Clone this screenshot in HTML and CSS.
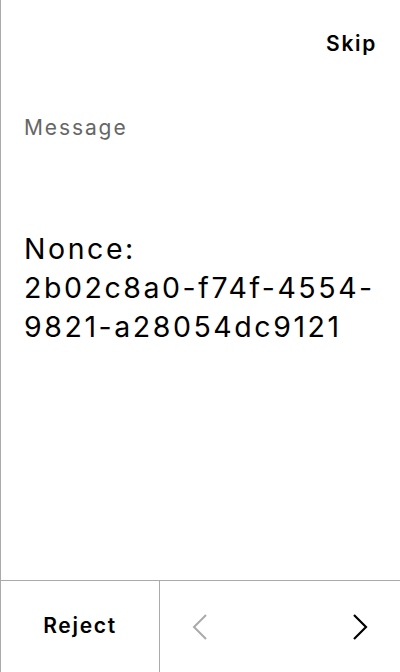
FILE: index.html
```html
<!DOCTYPE html>
<html>
<head>
<meta charset="utf-8">
<link rel="stylesheet" href="styles.css">
</head>
<body>
<div class="screen">
  <header class="top">
    <span class="skip">Skip</span>
  </header>
  <main class="content">
    <div class="label">Message</div>
    <div class="message">Nonce:<br>2b02c8a0-f74f-4554-9821-a28054dc9121</div>
  </main>
  <footer class="footer">
    <div class="reject">Reject</div>
    <div class="nav">
      <svg class="chev" width="16" height="28" viewBox="0 0 16 28"><path d="M14 2 L2 14 L14 26" fill="none" stroke="#aaaaaa" stroke-width="2"/></svg>
      <svg class="chev" width="16" height="28" viewBox="0 0 16 28"><path d="M2 2 L14 14 L2 26" fill="none" stroke="#000" stroke-width="2.2"/></svg>
    </div>
  </footer>
</div>
</body>
</html>
```
FILE: styles.css
```css
* { box-sizing: border-box; }
html, body { margin: 0; padding: 0; background: #fff; }
body { font-family: Inter, "Noto Sans", sans-serif; color: #000; }
.screen {
  width: 400px;
  height: 672px;
  border-left: 1px solid #aaaaaa;
  display: flex;
  flex-direction: column;
}
.top {
  display: flex;
  justify-content: flex-end;
  padding: 30px 23px 0 0;
  height: 70px;
}
.skip { font-size: 21px; font-weight: 600; line-height: 28px; letter-spacing: 0.08em; }
.content { flex: 1; padding: 44px 14px 0 23px; }
.label { font-size: 21px; color: #666; line-height: 28px; letter-spacing: 0.09em; }
.message {
  margin-top: 87px;
  font-size: 28.5px;
  line-height: 39px;
  letter-spacing: 0.09em;
}
.footer {
  height: 92px;
  border-top: 1px solid #aaaaaa;
  display: flex;
}
.reject {
  width: 159px;
  border-right: 1px solid #aaaaaa;
  display: flex;
  align-items: center;
  justify-content: center;
  font-size: 21px;
  font-weight: 600;
  padding-bottom: 2px;
  letter-spacing: 0.08em;
}
.nav {
  flex: 1;
  display: flex;
  align-items: center;
  justify-content: space-between;
  padding: 0 32px 0 32px;
}
.chev { display: block; }
```
